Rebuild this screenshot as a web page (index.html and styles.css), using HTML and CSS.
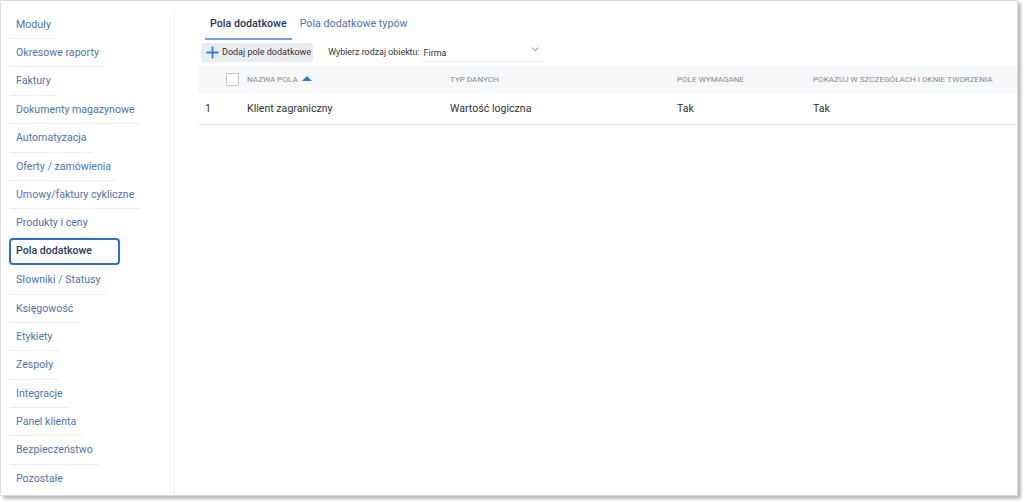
FILE: index.html
```html
<!DOCTYPE html>
<html lang="pl">
<head>
    <meta charset="UTF-8">
    <title>Pola dodatkowe</title>
    <link rel="stylesheet" href="styles.css">
</head>
<body>
    <div class="frame">
        <aside class="sidebar">
            <ul class="menu">
                <li><a href="#">Moduły</a></li>
                <li><a href="#">Okresowe raporty</a></li>
                <li><a href="#">Faktury</a></li>
                <li><a href="#">Dokumenty magazynowe</a></li>
                <li><a href="#">Automatyzacja</a></li>
                <li><a href="#">Oferty / zamówienia</a></li>
                <li><a href="#">Umowy/faktury cykliczne</a></li>
                <li><a href="#">Produkty i ceny</a></li>
                <li><a href="#" class="active">Pola dodatkowe</a></li>
                <li><a href="#">Słowniki / Statusy</a></li>
                <li><a href="#">Księgowość</a></li>
                <li><a href="#">Etykiety</a></li>
                <li><a href="#">Zespoły</a></li>
                <li><a href="#">Integracje</a></li>
                <li><a href="#">Panel klienta</a></li>
                <li><a href="#">Bezpieczeństwo</a></li>
                <li><a href="#">Pozostałe</a></li>
            </ul>
        </aside>

        <main class="content">
            <nav class="tabs">
                <a href="#" class="tab current">Pola dodatkowe</a>
                <a href="#" class="tab">Pola dodatkowe typów</a>
            </nav>

            <div class="toolbar">
                <button class="add-btn">
                    <svg width="13" height="13" viewBox="0 0 13 13"><path d="M6.5 0.5v12M0.5 6.5h12" stroke="#2d7ed3" stroke-width="1.8" fill="none"/></svg>
                    <span>Dodaj pole dodatkowe</span>
                </button>
                <span class="select-label">Wybierz rodzaj obiektu:</span>
                <div class="select">
                    <span>Firma</span>
                    <svg width="8" height="5" viewBox="0 0 8 5"><path d="M0.5 0.5l3.5 3.5 3.5-3.5" stroke="#999" stroke-width="1" fill="none"/></svg>
                </div>
            </div>

            <div class="table">
                <div class="row head">
                    <div class="cell"><span class="checkbox"></span></div>
                    <div class="cell">Nazwa pola <span class="sort"></span></div>
                    <div class="cell">Typ danych</div>
                    <div class="cell">Pole wymagane</div>
                    <div class="cell">Pokazuj w szczegółach i oknie tworzenia</div>
                </div>
                <div class="row">
                    <div class="cell num">1</div>
                    <div class="cell">Klient zagraniczny</div>
                    <div class="cell">Wartość logiczna</div>
                    <div class="cell">Tak</div>
                    <div class="cell">Tak</div>
                </div>
            </div>
        </main>
    </div>
</body>
</html>
```

FILE: styles.css
```css
* {
    margin: 0;
    padding: 0;
    box-sizing: border-box;
    font-family: Roboto, 'Liberation Sans', sans-serif;
}

body {
    background: #fff;
    width: 1024px;
    height: 502px;
    overflow: hidden;
}

.frame {
    width: 1018px;
    height: 496px;
    border: 1px solid #dcdcdc;
    background: #fff;
    box-shadow: 3px 3px 3px rgba(0, 0, 0, 0.28);
    display: flex;
}

/* sidebar */
.sidebar {
    width: 174px;
    margin-top: 9px;
    border-right: 1px solid #eeeeee;
}

.menu {
    list-style: none;
    padding-top: 0.6px;
}

.menu a {
    display: inline-block;
    margin-left: 9px;
    padding: 7px 6px 6.4px;
    line-height: 14px;
    font-size: 10.6px;
    color: #4f74b0;
    text-decoration: none;
    border-bottom: 1px solid #eeeeee;
}

.menu li:last-child a {
    border-bottom: none;
}

.menu a.active {
    margin-left: 8px;
    width: 111px;
    padding: 4.5px 5px;
    margin-bottom: 1.4px;
    border: 2px solid #3170c6;
    border-radius: 4px;
    color: #263a5c;
    font-weight: 500;
}

/* content */
.content {
    flex: 1;
    padding: 10px 0 0 23px;
}

.tabs {
    display: flex;
    gap: 3px;
    margin-left: 7px;
}

.tab {
    padding: 6px 5px 7px;
    line-height: 14px;
    font-size: 10.7px;
    color: #4f74b0;
    text-decoration: none;
    border-bottom: 2px solid transparent;
}

.tab.current {
    color: #263a5c;
    font-weight: 500;
    border-bottom-color: #71a8e0;
}

.toolbar {
    display: flex;
    align-items: center;
    margin-top: 2px;
    margin-left: 3px;
    height: 20px;
}

.add-btn {
    display: flex;
    align-items: center;
    gap: 3px;
    height: 19px;
    padding: 0 2px 0 5px;
    border: none;
    border-radius: 3px;
    background: #e9edf2;
    font-size: 9px;
    color: #333;
    white-space: nowrap;
}

.select-label {
    margin-left: 15px;
    font-size: 8.9px;
    color: #333;
    white-space: nowrap;
}

.select {
    display: flex;
    align-items: center;
    justify-content: space-between;
    width: 123px;
    height: 20px;
    margin-left: 1px;
    padding: 2px 5px 0 3px;
    border-bottom: 1px solid #eeeeee;
    font-size: 8.9px;
    color: #333;
}

.select svg {
    margin-top: -6px;
}

.table {
    margin-top: 3px;
}

.row {
    display: grid;
    grid-template-columns: 49px 203px 227px 136px 1fr;
    align-items: center;
    height: 32px;
    border-bottom: 1px solid #eaeaea;
    font-size: 10.6px;
    color: #333;
}

.row.head {
    height: 28px;
    background: #f6f8fa;
    border-bottom: none;
    font-size: 8.1px;
    text-transform: uppercase;
    color: #8a8a8a;
}

.checkbox {
    display: block;
    width: 13px;
    height: 13px;
    margin-left: 28px;
    border: 1px solid #c8c8c8;
    border-radius: 1px;
    background: #fff;
}

.sort {
    display: inline-block;
    margin-left: 2px;
    border-left: 5px solid transparent;
    border-right: 5px solid transparent;
    border-bottom: 5px solid #2d7ed3;
    vertical-align: 1px;
}

.num {
    padding-left: 7px;
}
```
